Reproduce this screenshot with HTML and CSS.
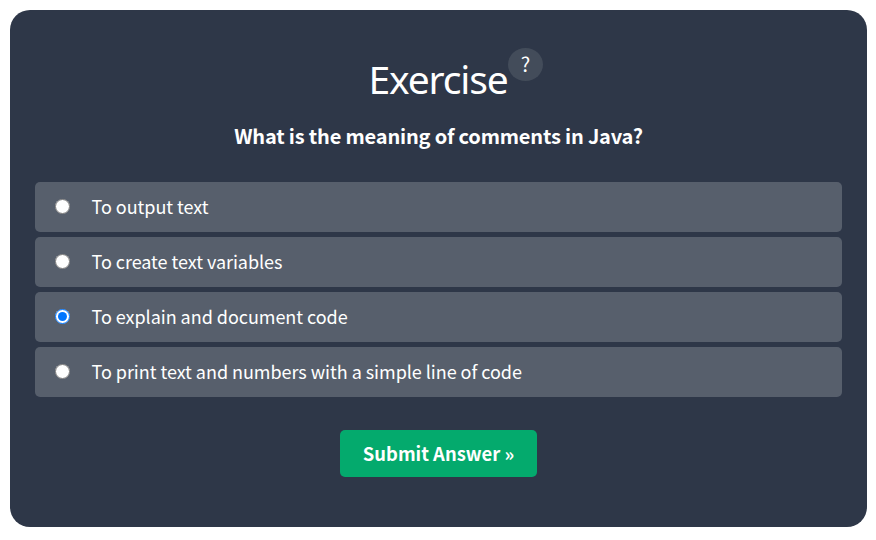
FILE: index.html
```html
<!DOCTYPE html>
<html lang="en">
<head>
<meta charset="utf-8">
<title>Exercise</title>
<link rel="stylesheet" href="styles.css">
</head>
<body>
<main class="exercise">
  <h2 class="title"><span class="title-text">Exercise</span><span class="help"><span class="help-mark">?</span></span></h2>
  <p class="question">What is the meaning of comments in Java?</p>
  <form class="answers">
    <label class="answer"><input class="radio" type="radio" name="answer"><span class="answer-text">To output text</span></label>
    <label class="answer"><input class="radio" type="radio" name="answer"><span class="answer-text">To create text variables</span></label>
    <label class="answer"><input class="radio" type="radio" name="answer" checked><span class="answer-text">To explain and document code</span></label>
    <label class="answer"><input class="radio" type="radio" name="answer"><span class="answer-text">To print text and numbers with a simple line of code</span></label>
  </form>
  <button class="submit" type="button">Submit Answer »</button>
</main>
</body>
</html>
```
FILE: styles.css
```css
* { box-sizing: border-box; }
body { margin: 0; background: #fff; font-family: "Noto Sans CJK SC", sans-serif; color: #fff; }
.exercise {
  width: 857px; height: 517px; margin: 10px 0 0 10px; padding: 38px 25px 0;
  border-radius: 20px; background: #2e3748;
  display: flex; flex-direction: column; align-items: center;
}
.title { display: flex; align-items: flex-start; margin: 0 0 0 35px; height: 64px; font-weight: 400; width: 173px; }
.title-text { font-family: "Noto Sans", sans-serif; font-size: 39px; line-height: 62px; width: 139px; margin-left: -1px; white-space: nowrap; letter-spacing: -1.15px; }
.help { width: 35px; height: 33px; border-radius: 50%; background: #434c5a; display: grid; place-items: center; flex: none; }
.help-mark { font-size: 20px; line-height: 31px; font-weight: 400; padding: 0 0 2px 1px; }
.question { margin: 9px 0 0; height: 30px; font-size: 20px; line-height: 30px; font-weight: 700; white-space: nowrap; letter-spacing: -.18px; }
.answers { width: 100%; margin-top: 31px; display: grid; gap: 5px; }
.answer { height: 50px; border-radius: 5px; background: #575f6c; display: flex; align-items: center; padding-left: 20px; gap: 21.5px; }
.radio { width: 15px; height: 15px; margin: -2px 0 0; flex: none; }
.answer-text { font-size: 18px; line-height: 30px; padding-bottom: 2px; white-space: nowrap; letter-spacing: -.04px; }
.submit { margin-top: 33px; width: 197px; height: 47px; padding: 0 0 2px; border: 0; border-radius: 5px; background: #04aa6d; color: #fff; font: 700 18.4px/30px "Noto Sans CJK SC", sans-serif; white-space: nowrap; }
```
